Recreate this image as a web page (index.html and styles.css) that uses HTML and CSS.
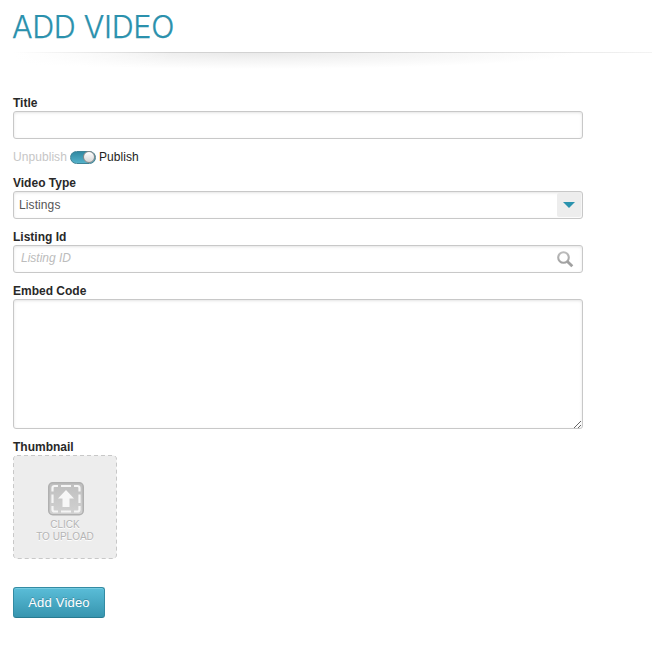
FILE: index.html
```html
<!DOCTYPE html>
<html lang="en">
<head>
<meta charset="utf-8">
<title>Add Video</title>
<link rel="stylesheet" href="styles.css">
</head>
<body>
<header class="heading">
  <h1>ADD VIDEO</h1>
  <div class="rule"></div>
</header>
<form class="form">
  <label class="label" for="title">Title</label>
  <input class="field" id="title" type="text">
  <div class="publish">
    <span class="off">Unpublish</span>
    <span class="switch"><span class="knob"></span></span>
    <span>Publish</span>
  </div>
  <div class="label">Video Type</div>
  <div class="field select">
    <span>Listings</span>
    <span class="arrow"><svg width="12" height="6" viewBox="0 0 12 6"><path d="M0 0h12L6 6z" fill="#2a93ae"/></svg></span>
  </div>
  <label class="label" for="listing">Listing Id</label>
  <div class="field search">
    <input id="listing" type="text" placeholder="Listing ID">
    <svg width="17" height="17" viewBox="0 0 17 17" fill="none">
      <defs><linearGradient id="lens" x1="0" y1="0" x2="0" y2="1"><stop stop-color="#bcbcbc"/><stop offset="1" stop-color="#a2a2a2"/></linearGradient></defs>
      <circle cx="6.500" cy="6.500" r="5.300" stroke="url(#lens)" stroke-width="2.100"/>
      <path d="M10.400 10.400l4.900 4.900" stroke="#a0a0a0" stroke-width="2.800"/>
    </svg>
  </div>
  <label class="label" for="embed">Embed Code</label>
  <div class="field area">
    <textarea id="embed"></textarea>
    <svg class="grip" width="8" height="8" viewBox="0 0 8 8" shape-rendering="crispEdges"><path d="M0 7h1v1H0zM1 6h1v1H1zM2 5h1v1H2zM3 4h1v1H3zM4 3h1v1H4zM5 2h1v1H5zM6 1h1v1H6zM4 7h1v1H4zM5 6h1v1H5zM6 5h1v1H6z" fill="#666"/></svg>
  </div>
  <div class="label">Thumbnail</div>
  <div class="upload">
    <svg class="border" width="104" height="104"><rect x=".5" y=".5" width="103" height="103" rx="3.5" fill="#ededed" stroke="#c8c8c8" stroke-dasharray="4 3"/></svg>
    <svg class="icon" width="36" height="34" viewBox="0 0 36 34">
      <defs><linearGradient id="plate" x1="0" y1="0" x2="0" y2="1"><stop stop-color="#bebebe"/><stop offset="1" stop-color="#d2d2d2"/></linearGradient></defs>
      <rect x=".75" y=".75" width="34.5" height="32" rx="4" fill="url(#plate)" stroke="#b0b0b0" stroke-width="1.5"/>
      <g fill="none" stroke="#f5f5f5" stroke-width="2.2">
        <path d="M4.500 9.500V6q0-2 2-2H10M26 4h3.500q2 0 2 2v3.500M31.500 24v3.500q0 2-2 2H26M10 29.500H6.500q-2 0-2-2V24"/>
        <path d="M13 4h10M13 29.500h10M4.500 12.500v8.500M31.500 12.500v8.500"/>
      </g>
      <path d="M18 8l8 8.500h-4.500V25h-7v-8.500H10z" fill="#f7f7f7"/>
    </svg>
    <span>CLICK<br>TO UPLOAD</span>
  </div>
  <button class="submit" type="button">Add Video</button>
</form>
</body>
</html>
```
FILE: styles.css
```css
* { box-sizing: border-box; }
body {
  margin: 0;
  background: #fff;
  color: #222;
  font: 12px/16px "Liberation Sans", Arial, sans-serif;
  overflow: hidden;
}
.heading { height: 95px; padding: 8px 0 0 12px; }
h1 {
  margin: 0;
  height: 44px;
  font: 300 30.5px/38px Inter, "Liberation Sans", sans-serif;
  letter-spacing: -0.3px;
  color: #2b91ad;
  -webkit-text-stroke: .25px #2b91ad;
  white-space: nowrap;
}
.rule {
  height: 20px;
  margin-left: 1px;
  background:
    linear-gradient(90deg, #fff, #d2d2d2 25%, #d2d2d2 55%, #f3f3f3) 0 0 / 100% 1px no-repeat,
    linear-gradient(90deg, #fff, rgba(255, 255, 255, 0) 25%),
    radial-gradient(ellipse 50% 16px at 38% 1px, #e9e9e9, #f4f4f4 45%, #fff);
}
.form { width: 583px; padding-left: 13px; }
.label {
  display: block;
  height: 16px;
  margin-top: 10px;
  font-weight: bold;
  color: #292929;
}
.form > .label:first-child { margin-top: 0; }
.field {
  display: flex;
  width: 570px;
  height: 28px;
  border: 1px solid #c8c8c8;
  border-radius: 3px;
  background: #fff;
  box-shadow: inset 0 1px 3px rgba(0, 0, 0, .11);
  outline: 0;
}
.publish { display: flex; align-items: center; height: 16px; margin-top: 10px; letter-spacing: .06px; }
.off { width: 57px; color: #c6c6c6; }
.switch {
  display: flex;
  justify-content: flex-end;
  align-items: center;
  width: 26px;
  height: 13px;
  margin-right: 3px;
  border: 1px solid #408396;
  border-radius: 7px;
  background: linear-gradient(#3189a2, #54b1c9);
}
.knob {
  flex: none;
  width: 12px;
  height: 12px;
  border: 1px solid #888;
  border-radius: 50%;
  background: linear-gradient(#fff, #d5d5d5);
}
.select { align-items: center; justify-content: space-between; padding: 0 1px 0 5px; color: #555; letter-spacing: .1px; }
.arrow {
  display: flex;
  align-items: center;
  justify-content: center;
  width: 24px;
  height: 24px;
  border-radius: 2px;
  background: #ededed;
}
.search { align-items: center; justify-content: space-between; padding: 0 8px 0 7px; }
.search input {
  width: 400px;
  height: 16px;
  margin-bottom: 2px;
  padding: 0;
  border: 0;
  outline: 0;
  background: transparent;
  font: italic 12px/16px "Liberation Sans", Arial, sans-serif;
}
.search input::placeholder { color: #bcbcbc; opacity: 1; }
.area { position: relative; height: 130px; }
.area textarea {
  width: 100%;
  height: 100%;
  border: 0;
  outline: 0;
  resize: none;
  background: transparent;
}
.grip { position: absolute; right: 0; bottom: 0; }
.upload {
  position: relative;
  display: flex;
  flex-direction: column;
  align-items: center;
  width: 104px;
  height: 104px;
  padding-top: 27px;
  color: #b5b5b5;
  font-size: 10px;
  line-height: 12px;
  text-align: center;
  text-shadow: 0 1px #fff;
}
.border { position: absolute; top: 0; left: 0; }
.icon { position: relative; margin: 0 0 3px 2px; }
.upload span { position: relative; }
.submit {
  display: block;
  width: 92px;
  height: 31px;
  margin-top: 28px;
  padding: 0;
  border: 1px solid #338ba3;
  border-bottom-color: #287b91;
  border-radius: 3px;
  background: linear-gradient(#5abdd8, #3795af);
  box-shadow: inset 0 1px #75cbe1;
  color: #fff;
  font: 13px/29px "Liberation Sans", Arial, sans-serif;
  letter-spacing: .2px;
  text-shadow: 0 -1px rgba(0, 0, 0, .2);
}
```
